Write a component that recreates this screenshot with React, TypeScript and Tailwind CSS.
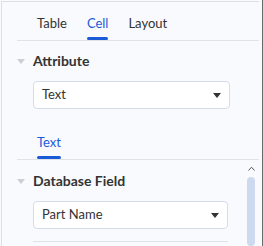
import { useState } from 'react';

const font = "font-['Lato',sans-serif]";

const Caret = () => (
  <svg width="8" height="5" viewBox="0 0 8 5" className="shrink-0">
    <path d="M0 0h8L4 5z" fill="#333" />
  </svg>
);

const Tabs = ({ tabs, active, onPick }: { tabs: string[]; active: string; onPick: (t: string) => void }) => (
  <div className="ml-[15px] flex gap-3 border-b border-[#dfe2e8] pl-4">
    {tabs.map((t) => (
      <button key={t} onClick={() => onPick(t)} className="flex flex-col items-stretch px-1">
        <span className={`text-[13px] leading-5 ${t === active ? 'text-[#1b5bd6]' : 'text-[#333]'}`}>{t}</span>
        <span className={`mt-[4px] h-[3px] rounded-full ${t === active ? 'bg-[#1b5bd6]' : 'bg-transparent'}`} />
      </button>
    ))}
  </div>
);

const Section = ({ title, value, width }: { title: string; value: string; width: string }) => (
  <div className="pl-[15px]">
    <div className="flex items-center gap-2">
      <svg width="8" height="5" viewBox="0 0 8 5">
        <path d="M0 0h8L4 5z" fill="#c9ced8" />
      </svg>
      <span className="text-[14px] font-bold leading-5 text-[#333]">{title}</span>
    </div>
    <div
      className={`ml-4 mt-[10px] flex h-7 items-center justify-between rounded border border-[#d5ddeb] bg-white pl-2 pr-2 ${width}`}
    >
      <span className="text-[13px] text-[#333]">{value}</span>
      <Caret />
    </div>
  </div>
);

export default function App() {
  const [tab, setTab] = useState('Cell');
  const [sub, setSub] = useState('Text');

  return (
    <div className={`flex h-[246px] w-[263px] overflow-hidden bg-[#f8fafd] ${font}`}>
      <div className="mt-px ml-px flex w-[258px] flex-col border-l border-t border-[#e0e0e0]">
        {/* Top tabs */}
        <div className="pt-[11px]">
          <Tabs tabs={['Table', 'Cell', 'Layout']} active={tab} onPick={setTab} />
        </div>

        <div className="mt-[10px]">
          <Section title="Attribute" value="Text" width="w-[197px]" />
        </div>

        {/* Sub tabs */}
        <div className="mt-[23px]">
          <Tabs tabs={['Text']} active={sub} onPick={setSub} />
        </div>

        {/* Scroll area */}
        <div className="flex flex-1 min-h-0">
          <div className="flex-1 pt-[11px]">
            <Section title="Database Field" value="Part Name" width="w-[195px]" />
            <div className="ml-[31px] mt-3 w-[195px] border-t border-[#dfe2e8]" />
          </div>
          <div className="mr-1 flex w-2 flex-col items-center pt-[6px]">
            <svg width="7" height="5" viewBox="0 0 7 5">
              <path d="M0.5 4.5L3.5 1.2L6.5 4.5" fill="none" stroke="#555" strokeWidth="1" />
            </svg>
            <div className="mt-[6px] w-2 flex-1 rounded-full bg-[#cdd9ef]" />
          </div>
        </div>
      </div>
      <div className="w-[3px]" />
      <div className="w-px bg-[#6b6b6b]" />
    </div>
  );
}
